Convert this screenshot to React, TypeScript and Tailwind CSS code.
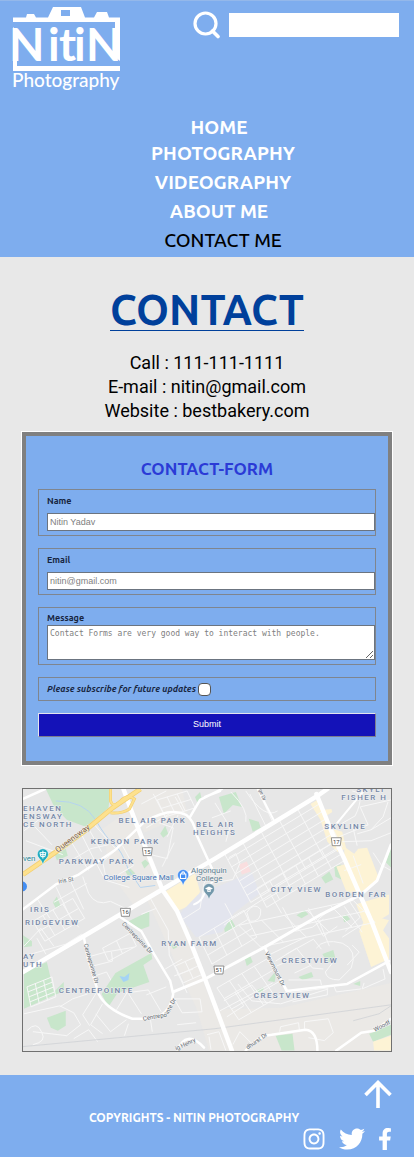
import React from "react";
import { FaFacebookF, FaInstagram, FaTwitter } from "react-icons/fa";

const display = "font-['Ubuntu','Noto_Sans',sans-serif]";

function Logo() {
  return (
    <svg viewBox="0 0 110 88" className="h-[88px] w-[110px] overflow-visible" role="img" aria-label="Nitin Photography" fill="#fff">
      <path d="M1 10.5H14L15 7H22L24 10.5H36L41 0H69L73 10.5H82L85 5H95L97 10.5H108V54L103 50V15H1ZM49 3V9H58V3Z" fillRule="evenodd" />
      <path d="M1 20L5 24V59H108V64H1Z" />
      <text x="-3 36 47 62 74" y="54" className="font-['Lato',sans-serif] text-[46px] font-bold">NitiN</text>
      <text x="0" y="80" className="font-['Lato',sans-serif] text-[19px] font-medium">Photography</text>
    </svg>
  );
}

const links = [
  { text: "HOME", style: "pr-2 leading-[26px] font-semibold text-white" },
  { text: "PHOTOGRAPHY", style: "leading-[26px] font-semibold text-white" },
  { text: "VIDEOGRAPHY", style: "leading-[32px] font-semibold text-white" },
  { text: "ABOUT ME", style: "pr-2 leading-[26px] font-semibold text-white" },
  { text: "CONTACT ME", style: "leading-[32px] font-medium text-black" },
];

function Header() {
  return (
    <header className="border-t border-[#94b8ea] bg-[#7eadee] pb-px">
      <div className="flex items-start justify-between pt-1.5 pr-[15px] pl-3">
        <Logo />
        <form className="flex items-center gap-2 pt-1" onSubmit={(e) => e.preventDefault()}>
          <button type="submit" aria-label="Search">
            <svg viewBox="0 0 28 28" className="size-7" fill="none" stroke="#fff" strokeWidth="3.2">
              <circle cx="12.5" cy="12.5" r="10.5" />
              <path d="M19.5 20L25 25.5" strokeWidth="3.6" strokeLinecap="round" />
            </svg>
          </button>
          <input type="search" aria-label="Search the site" className="h-6 w-[170px] bg-white px-2 text-sm" />
        </form>
      </div>
      <nav className="pt-[19px] pl-8">
        <ul className={`flex flex-col items-center text-[19px] ${display}`}>
          {links.map((l) => (
            <li key={l.text} className={l.style}>
              <a href="#" className="block">{l.text}</a>
            </li>
          ))}
        </ul>
      </nav>
    </header>
  );
}

const fieldBox = "border border-[#7f858e] pl-2";
const labelText = `block text-[9px] font-semibold text-[#17253f] ${display}`;
const control = "block w-full border border-[#6b7480] bg-white px-0.5 placeholder:text-[#808080]";
const textInput = "h-[18px] font-['Liberation_Sans',sans-serif] text-[9px]";

function ContactForm() {
  return (
    <form
      className="mx-[21px] mt-2 border border-white bg-[#7eadee]"
      onSubmit={(e) => e.preventDefault()}
    >
      <div className="flex flex-col gap-3 border-4 border-[#808080] px-3 pt-[21px] pb-6">
        <h2 className={`-mb-1 text-center text-[17px] leading-6 font-semibold text-[#2b3bd6] ${display}`}>CONTACT-FORM</h2>
        <div className={`${fieldBox} pt-1 pb-1`}>
          <label htmlFor="name" className={`${labelText} pb-1 leading-[15px]`}>Name</label>
          <input id="name" placeholder="Nitin Yadav" className={`${control} ${textInput}`} />
        </div>
        <div className={`${fieldBox} pt-1 pb-1`}>
          <label htmlFor="email" className={`${labelText} pb-1 leading-[15px]`}>Email</label>
          <input id="email" type="email" placeholder="nitin@gmail.com" className={`${control} ${textInput}`} />
        </div>
        <div className={`${fieldBox} pt-1 pb-1`}>
          <label htmlFor="message" className={`${labelText} leading-[13px]`}>Message</label>
          <textarea id="message" placeholder="Contact Forms are very good way to interact with people." className={`${control} h-[35px] pt-0.5 font-['DejaVu_Sans_Mono',monospace] text-[8px] leading-3`} />
        </div>
        <div className={`${fieldBox} flex items-center gap-0.5 py-[3px]`}>
          <label htmlFor="subscribe" className={`text-[9px] leading-4 font-semibold text-[#17253f] italic ${display}`}>Please subscribe for future updates</label>
          <input id="subscribe" type="checkbox" className="size-[13px] appearance-none rounded-[4px] border border-[#555] bg-white checked:bg-[#1412b8]" />
        </div>
        <button type="submit" className="h-6 border border-t-[#e4e4ee] border-r-[#7d7d8f] border-b-[#7d7d8f] border-l-[#e4e4ee] bg-[#1412b8] font-['Liberation_Sans',sans-serif] text-[9px] text-white">Submit</button>
      </div>
    </form>
  );
}

/* Parallel street families: n lines along (ux,uy), m lines along (vx,vy). */
function blocks(x: number, y: number, ux: number, uy: number, vx: number, vy: number, n: number, m: number) {
  let d = "";
  for (let i = 0; i <= n; i++) d += `M${x + (vx * i) / n} ${y + (vy * i) / n}l${ux} ${uy}`;
  for (let j = 0; j <= m; j++) d += `M${x + (ux * j) / m} ${y + (uy * j) / m}l${vx} ${vy}`;
  return d;
}

const streets = [
  blocks(202, 64, 92, -56, 27, 50, 7, 5),
  blocks(245, 119, 78, -47, -10, -19, 3, 6),
  blocks(217, 137, 115, -25, 22, 22, 2, 5),
  blocks(195, 200, 50, -29, 22, 32, 3, 4),
  blocks(190, 176, 45, -27, -13, -27, 3, 3),
  blocks(135, 11, 30, -9, 8, 17, 2, 3),
  blocks(4, 199, 25, -10, 4, 20, 4, 3),
  blocks(10, 133, 40, -23, 12, 20, 2, 4),
  blocks(80, 160, 28, -15, 6, 13, 1, 2),
  blocks(153, 178, 20, -9, 8, 17, 2, 2),
];

const lanes =
  "M1 42L28 22M3 52L40 66M12 38L29 56M58 44L70 68L83 92M66 40L79 63M49 54L66 82M71 35L93 60M48 72L68 60L86 56M100 57L111 77L96 86M93 62L80 73L84 92L107 99M60 88L66 105Q73 118 88 113L105 121M14 110L27 130M33 98L47 128L56 139M47 91L61 121M31 114L64 95M120 64L145 70L151 39L137 34M152 54L140 78M156 26L145 48M162 24L153 8M119 15L144 2M131 5L144 30M124 39L147 25M127 108L146 142L147 167L157 188M134 120L119 126M159 132L178 120L182 95Q184 89 193 86M1 158L18 140L31 158M8 166L43 156L59 146M14 150L23 166M1 226L37 218L51 225L58 237L44 248L10 244M37 219L50 211L65 206M4 243Q14 232 19 245Q24 254 10 257M65 169L83 164L112 159M70 178L90 173L89 164M72 188L84 184L91 197M75 203L60 227L67 238M80 216L68 237L80 246M94 222L105 204L119 226M104 205L126 202L139 224M124 207L144 199M73 226L88 244L104 232M51 251L66 242L75 254M106 236L102 248M128 231L130 244M152 211L178 211L180 224L160 225ZM155 237L174 235M152 188L171 181M155 184L165 205M143 181L160 171M224 2Q243 31 256 22M209 3Q227 21 224 33M193 14L208 38L204 53M190 29L209 22M228 5L245 39M236 1L251 33M207 69L214 65L218 75L211 91L193 94M320 35L334 27Q345 4 331 2M336 45L350 41L370 29M318 48L347 36L339 18L370 11M350 41L362 28L367 13M321 53L350 52L370 44M336 57L331 35M323 82L340 76M332 67L342 95M362 79L352 64M363 78L370 82M203 115L211 130L202 137M211 130L249 106L260 125M225 124Q232 113 239 121Q240 134 228 133ZM261 119L274 143L291 139L302 131M287 120L302 148L316 138M295 160Q302 150 321 155Q337 162 330 180L318 192Q305 192 304 184L315 170M265 166L292 151L300 161M254 173L275 160L291 180L302 181M247 167L284 149M255 178L276 169M267 192L299 192L300 197M273 185L290 177M326 177L338 164L331 157M321 149L340 137M343 195L341 201L364 191L362 181M269 205L306 200V207L271 214M313 199L315 204L340 201M216 196L230 213L259 216L307 201M202 213L230 197L245 215M198 223L251 195M205 229L222 218L213 204M258 244L259 239L277 235L278 243M283 241L283 234L307 231L312 245L303 253L287 250M185 247L197 244L204 263M211 257L218 244L232 258M189 262L187 249M311 119L297 131L308 158M327 111L339 129L324 143M323 118L341 144";

const areaNames: [string, number, number][] = [
  ["EHAVEN", 0, 22], ["ENSWAY", 0, 30], ["CE NORTH", 0, 38],
  ["BEL AIR PARK", 96, 34], ["BEL AIR", 174, 38], ["HEIGHTS", 171, 46],
  ["KENSON PARK", 68, 55], ["PARKWAY PARK", 36, 75],
  ["SKYLI", 335, 3], ["FISHER H", 320, 11], ["SKYLINE", 303, 40],
  ["CITY VIEW", 249, 104], ["BORDEN FAR", 304, 109],
  ["IRIS", 7, 124], ["RIDGEVIEW", 2, 137], ["AY", 0, 171], ["UTH", 0, 179],
  ["RYAN FARM", 139, 158], ["CENTREPOINTE", 36, 205],
  ["CRESTVIEW", 260, 175], ["CRESTVIEW", 232, 210],
];

const shields: [string, number, number][] = [["15", 125, 63], ["16", 103, 124], ["17", 315, 53], ["51", 197, 182]];

function Pin({ x, y, color, kind }: { x: number; y: number; color: string; kind: "bag" | "cap" | "tree" }) {
  return (
    <g transform={`translate(${x} ${y})`}>
      <path d="M0 10Q-1 6-4 3.5A5.6 5.6 0 1 1 4 3.5Q1 6 0 10Z" fill={color} stroke="#fff" strokeWidth=".5" />
      {kind === "bag" && <path d="M-2.7-1.5H2.7V3H-2.7ZM-1.4-1.5V-2.3A1.4 1.4 0 0 1 1.4-2.3V-1.5" fill="none" stroke="#fff" strokeWidth="1.1" />}
      {kind === "cap" && <path d="M-4-1L0-3L4-1L0 1ZM-2 .5V2Q0 3 2 2V.5L0 1.6Z" fill="#fff" />}
      {kind === "tree" && <path d="M-3-2H3L2 2H-2ZM0-4V4M-2.5 0H2.5" fill="none" stroke="#fff" strokeWidth="1" />}
    </g>
  );
}

function AreaMap() {
  return (
    <svg viewBox="0 0 370 263" className="mx-auto mt-[22px] block w-[calc(100%-44px)] border border-[#707070] font-['Roboto',sans-serif]" role="img" aria-label="Map">
      <rect width="370" height="263" fill="#e7e7e7" />
      <g fill="#ebe9e6">
        <path d="M80 40L108 20L140 101L112 118L88 85Z" />
        <path d="M118 0H160L165 24L122 44L108 14Z" />
        <path d="M143 103L155 123L207 263H187L175 222L125 112Z" />
        <path d="M186 222L260 220L370 195V263H205Z" />
      </g>
      <g fill="#c8e6cb">
        <path d="M23 0H88L86 19L63 38L44 31L31 17Z" /><path d="M32 66L43 60L45 67L34 72Z" />
        <path d="M138 45L143 37L146 45L141 49Z" /><path d="M103 83L108 80L113 85L106 88Z" />
        <path d="M119 74L123 71L127 75L122 80Z" /><path d="M173 8L178 3L180 11L175 13Z" />
        <path d="M30 114L34 108L38 118L33 120Z" /><path d="M106 133L127 123V138L119 141L111 137Z" />
        <path d="M197 8L214 3L220 18L211 16L202 25Z" /><path d="M227 30L237 33L239 39L231 43Z" />
        <path d="M300 89L308 83L312 91L304 95Z" /><path d="M313 78L320 76V91L314 88Z" />
        <path d="M275 127L283 122L287 126L280 130Z" /><path d="M321 128L325 126L329 131L323 134Z" />
        <path d="M201 134L209 130L214 139L203 144Z" />
        <path d="M1 184L24 174L31 204L41 194V203L1 221Z" /><path d="M0 147L9 153V158L1 159Z" />
        <path d="M24 230L43 223V238L35 243L28 240Z" />
        <path d="M149 157L153 154L155 159L151 161Z" /><path d="M223 171L228 167L231 174L225 178Z" />
        <path d="M246 193L255 182L253 194Z" /><path d="M301 166L312 162L314 170L306 175Z" />
        <path d="M277 189L290 184L292 189L281 192Z" /><path d="M332 196L339 193V198Z" />
        <path d="M233 203L242 199L241 205Z" /><path d="M254 248L271 246L273 263H260Z" />
        <path d="M348 246L370 237V247L352 254Z" /><path d="M365 74L370 58V79Z" />
      </g>
      <g fill="#fdf3d5">
        <path d="M289 15L296 11L300 21L310 20L311 23L305 27L311 40L321 43L325 60L316 63L306 53L299 31Z" />
        <path d="M323 58L333 65L337 60L346 59L358 90L341 106L325 103L315 78L323 76Z" />
        <path d="M335 116L368 106V126L350 137L342 134Z" />
        <path d="M346 126L368 132L362 142L368 150V171L350 179L338 143Z" />
        <path d="M143 103L173 85L178 103L172 115L155 123Z" /><path d="M352 254L370 248V263H353Z" />
      </g>
      <path d="M157 126L176 106L230 84L238 105L212 125L200 144L174 149L164 136Z" fill="#e3e5ee" />
      <path d="M217 76L225 73L229 83L220 86Z" fill="#f9dedf" />
      <path d="M33 12Q62 12 73 31T91 55Q99 61 106 81L118 99L133 97" fill="none" stroke="#b5d4ef" strokeWidth="1" />
      <g fill="none" stroke="#f7f7f7" strokeWidth="1">
        <path d={streets.join("")} />
        <path d={lanes} strokeLinejoin="round" />
      </g>
      <path d="M79 206L93 185L129 165L130 171L121 177L127 194L95 205L86 219Z" fill="#c8e6cb" />
      <path d="M97 188L102 189L107 185L106 192L101 194Z" fill="#a4d3f5" />
      <path d="M0 259L193 241L370 217M332 233L358 226L370 218" fill="none" stroke="#cfd2d5" strokeWidth=".8" />
      <g fill="none" stroke="#fff" strokeLinecap="round" strokeLinejoin="round">
        <path d="M0 184L61 148L140 101L193 70L296 7L306 0" strokeWidth="4.5" />
        <path d="M101 0L109 22L126 66L140 101L155 123L168 153L183 191L210 263" strokeWidth="4.5" />
        <path d="M295 5L311 45L323 70L350 132L370 184" strokeWidth="4.5" />
        <path d="M151 204L183 191L243 159L300 126L340 106L356 92L370 56" strokeWidth="3" />
        <path d="M0 121L33 96L56 86L93 61L122 33Q148 18 164 26Q172 32 174 45L190 80M168 28L178 11L200 0M0 10L22 0M183 8L198 2" strokeWidth="2.5" />
        <path d="M61 148L65 169L76 206Q84 222 110 231H126Q148 229 151 206L148 193L130 163L119 143L98 129" strokeWidth="2.5" />
        <path d="M243 159L265 203L326 196L368 173M224 263Q236 248 250 247L284 242Q296 243 296 263M315 263L340 245L353 243L370 231M155 263Q164 241 182 260" strokeWidth="2.5" />
        <path d="M236 0L252 31M316 34L344 0M172 116Q182 113 184 98L190 94" strokeWidth="2" />
      </g>
      <g fill="none">
        <path d="M0 86L32 64L61 43L90 19L118 0M88 0V12Q91 20 98 12Q105 5 112 10L107 20Q99 25 88 24" stroke="#f3cf70" strokeWidth="3" />
        <path d="M0 86L32 64L61 43L90 19L118 0" stroke="#f3cf70" strokeWidth="5" />
        <path d="M0 86L32 64L61 43L90 19L118 0" stroke="#fde18e" strokeWidth="3.4" />
        <path d="M88 0V12Q91 20 98 12Q105 5 112 10L107 20Q99 25 88 24" stroke="#fde18e" strokeWidth="1.8" />
      </g>
      <g fill="#7587a6" className="text-[8px] font-medium tracking-[1.5px]" stroke="#eef0f2" strokeWidth="1.2" paintOrder="stroke">
        {areaNames.map(([t, x, y], i) => <text key={i} x={x} y={y}>{t}</text>)}
      </g>
      <g fill="#606870" className="text-[5px]" stroke="#f4f4f4" strokeWidth="1" paintOrder="stroke">
        <text transform="translate(35 64) rotate(-37)" fill="#795a3b" className="text-[8px]">Queensway</text>
        <text transform="translate(36 95) rotate(-10)" className="text-[6px]">Iris St</text>
        <text transform="translate(61 156) rotate(74)" className="text-[6px]">Centrepointe Dr</text>
        <text transform="translate(99 136) rotate(46)" className="text-[6px]">Centrepointe Dr</text>
        <text transform="translate(121 233) rotate(-10)" className="text-[6px]">Centrepo</text>
        <text transform="translate(146 227) rotate(-62)" className="text-[6px]">inte Dr</text>
        <text transform="translate(243 165) rotate(63)" className="text-[6px]">Viewmount Dr</text>
        <text transform="translate(226 262) rotate(-35)" className="text-[6px]">dhurst Dr</text>
        <text transform="translate(154 263) rotate(-25)" className="text-[6px]">ig Henry</text>
        <text transform="translate(354 244) rotate(-28)" className="text-[6px]">Woodf</text>
        <text transform="translate(237 1) rotate(68)">ge Dr</text>
      </g>
      <g className="text-[8px]" stroke="#f2f2f2" strokeWidth="1.2" paintOrder="stroke">
        <text x="81" y="91" fill="#4978b6">College Square Mall</text>
        <text x="169" y="84" fill="#607f91">Algonquin</text>
        <text x="174" y="92" fill="#607f91">College</text>
        <text x="0" y="72" fill="#25889a">ven</text>
      </g>
      {shields.map(([t, x, y]) => (
        <g key={t}>
          <path d={`M${x - 5} ${y - 4}H${x + 5}L${x + 4} ${y + 4}H${x - 4}Z`} fill="#fff" stroke="#777" strokeWidth=".8" />
          <text x={x} y={y + 2} textAnchor="middle" fill="#444" className="text-[6px]">{t}</text>
        </g>
      ))}
      <Pin x={20} y={66} color="#20acc0" kind="tree" />
      <Pin x={161} y={87} color="#438ef3" kind="bag" />
      <Pin x={187} y={101} color="#7398ab" kind="cap" />
      <circle cx="-1" cy="98" r="5" fill="#438ef3" />
    </svg>
  );
}

function Footer() {
  return (
    <footer className="mt-[23px] flex flex-col bg-[#7eadee] pt-[5px] pr-[22px] pb-[5px] text-white">
      <a href="#top" aria-label="Back to top" className="self-end">
        <svg viewBox="0 0 28 28" className="size-7" fill="none" stroke="#fff" strokeWidth="3.6">
          <path d="M14 28V3M1.5 15L14 2.5L26.5 15" />
        </svg>
      </a>
      <p className={`pt-0.5 pr-1 text-center text-[12px] leading-4 font-semibold ${display}`}>COPYRIGHTS - NITIN PHOTOGRAPHY</p>
      <div className="flex items-center justify-end gap-[13px]">
        <a href="#" aria-label="Instagram"><FaInstagram className="size-6" /></a>
        <a href="#" aria-label="Twitter"><FaTwitter className="size-[26px]" /></a>
        <a href="#" aria-label="Facebook"><FaFacebookF className="h-[22px] w-3.5" /></a>
      </div>
    </footer>
  );
}

export default function App() {
  return (
    <div id="top" className="bg-[#e8e8e8]">
      <Header />
      <main>
        <h1 className={`flex justify-center pt-8 text-[42px] leading-[41px] font-semibold text-[#00409b] ${display}`}>
          <span className="border-b border-[#00409b]">CONTACT</span>
        </h1>
        <address className="pt-5 text-center font-['Roboto',sans-serif] text-[18px] leading-6 text-black not-italic">
          <p>Call : 111-111-1111</p>
          <p>E-mail : nitin@gmail.com</p>
          <p>Website : bestbakery.com</p>
        </address>
        <ContactForm />
        <AreaMap />
      </main>
      <Footer />
    </div>
  );
}
